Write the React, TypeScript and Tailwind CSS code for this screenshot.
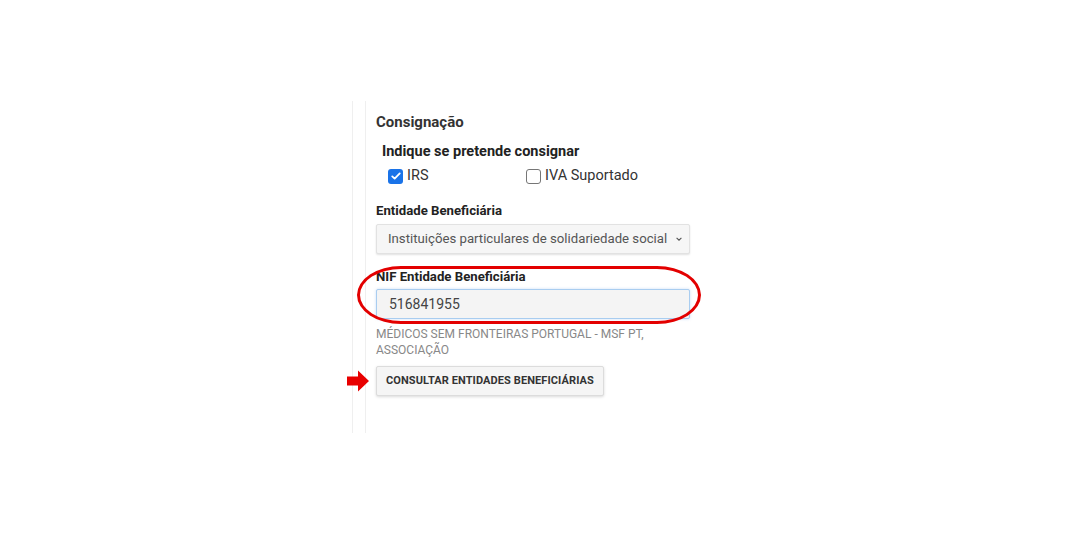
import React from 'react'

function CheckBox({ checked }: { checked: boolean }) {
  if (checked) {
    return (
      <span className="flex h-[15px] w-[15px] items-center justify-center rounded-[3px] bg-[#1a73e8]">
        <svg viewBox="0 0 16 16" className="h-[12px] w-[12px]" fill="none" stroke="white" strokeWidth="2.4" strokeLinecap="round" strokeLinejoin="round">
          <path d="M3 8.5l3.2 3L13 4.5" />
        </svg>
      </span>
    )
  }
  return <span className="h-[15px] w-[15px] rounded-[3px] border border-[#767676] bg-white" />
}

export default function App() {
  return (
    <div className="h-[549px] w-[1088px] bg-white pl-[352px] pt-[101px] font-['Roboto',sans-serif] text-[#333]">
      <div className="h-[332px] w-[360px] border-l border-[#efefef] pl-[12px]">
        <div className="relative h-full border-l border-[#efefef] pl-[10px] pt-[11px]">
          <h2 className="text-[15px] font-bold leading-[20px] text-[#333]">Consignação</h2>

          <p className="mt-[10px] pl-[6px] text-[14.5px] font-bold leading-[20px] text-[#222]">Indique se pretende consignar</p>

          <div className="mt-[4px] flex items-center pl-[12px] text-[14.5px] leading-[20px] text-[#333]">
            <label className="flex w-[138px] items-center gap-[4px]">
              <CheckBox checked />
              <span>IRS</span>
            </label>
            <label className="flex items-center gap-[4px]">
              <CheckBox checked={false} />
              <span>IVA Suportado</span>
            </label>
          </div>

          <p className="mt-[16px] text-[13.2px] font-bold leading-[18px] text-[#222]">Entidade Beneficiária</p>

          <div className="mt-[4px] flex h-[30px] w-[314px] items-center justify-between rounded-[2px] border border-[#e2e2e2] bg-[#f6f6f6] pl-[11px] pr-[6px] text-[13.2px] text-[#555] shadow-[0_1px_2px_rgba(0,0,0,0.12)]">
            <span className="whitespace-nowrap">Instituições particulares de solidariedade social</span>
            <svg viewBox="0 0 10 10" className="h-[8px] w-[8px]" fill="none" stroke="#555" strokeWidth="1.4">
              <path d="M2 3.5l3 3 3-3" />
            </svg>
          </div>

          <div className="relative mt-[14px]">
            <p className="text-[13.2px] font-bold leading-[18px] text-[#222]">NIF Entidade Beneficiária</p>
            <div className="mt-[3px] flex h-[30px] w-[314px] items-center rounded-[2px] border border-[#a9cdf0] bg-[#f4f4f4] pl-[12px] text-[14px] text-[#444] shadow-[0_0_3px_rgba(100,160,230,0.35)]">
              516841955
            </div>
            <div className="pointer-events-none absolute left-[-19px] top-[-2px] h-[58px] w-[344px] rounded-[44px/29px] border-[3px] border-[#e30000]" />
          </div>

          <p className="mt-[7px] w-[314px] text-[12px] leading-[16px] text-[#888]">
            MÉDICOS SEM FRONTEIRAS PORTUGAL - MSF PT, ASSOCIAÇÃO
          </p>

          <div className="relative mt-[8px] w-fit">
            <button className="flex h-[30px] items-center rounded-[2px] border border-[#dcdcdc] bg-[#f5f5f5] px-[9px] text-[11px] font-bold tracking-[0.1px] text-[#333] shadow-[0_1px_3px_rgba(0,0,0,0.15)]">
              CONSULTAR ENTIDADES BENEFICIÁRIAS
            </button>
            <svg viewBox="0 0 24 24" className="absolute left-[-30px] top-[3px] h-[24px] w-[24px]">
              <path d="M1 7.5h11V1.5l11 10.5-11 10.5v-6H1z" fill="#e80000" />
            </svg>
          </div>
        </div>
      </div>
    </div>
  )
}
